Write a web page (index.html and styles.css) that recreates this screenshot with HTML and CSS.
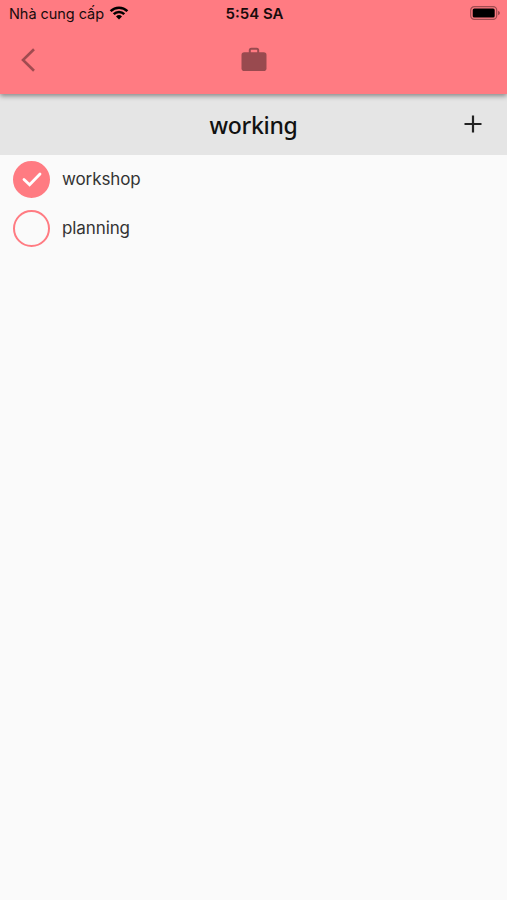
FILE: index.html
```html
<!DOCTYPE html>
<html lang="vi">
<head>
    <meta charset="UTF-8">
    <meta name="viewport" content="width=device-width, initial-scale=1">
    <title>working</title>
    <link rel="stylesheet" href="styles.css">
</head>
<body>

<header class="header">
    <div class="status-bar">
        <div class="carrier">
            <span class="carrier-name">Nhà cung cấp</span>
            <svg class="wifi" width="20" height="14" viewBox="0 0 20 14">
                <path d="M1.6 5.1a12 12 0 0 1 16.8 0M4.7 8.1a7.6 7.6 0 0 1 10.6 0" fill="none" stroke="#000" stroke-width="2.5"/>
                <path d="M7 10.5a4.3 4.3 0 0 1 6 0l-3 3z"/>
            </svg>
        </div>
        <span class="time">5:54 SA</span>
        <div class="battery">
            <svg width="30" height="14" viewBox="0 0 30 14">
                <rect x="0.7" y="0.7" width="26" height="12.6" rx="3.6" fill="none" stroke="#a04b50" stroke-width="1.2"/>
                <rect x="2.7" y="2.5" width="22" height="9" rx="1.6"/>
                <path d="M28 4.7q2 .7 2 2.3t-2 2.3z" fill="#a04b50"/>
            </svg>
        </div>
    </div>
    <nav class="nav-bar">
        <button class="back" aria-label="Back">
            <svg width="14" height="24" viewBox="0 0 14 24">
                <path d="M13 1.2L2 12l11 10.8" fill="none" stroke="#a04b50" stroke-width="2.6"/>
            </svg>
        </button>
        <svg class="briefcase" width="26" height="25" viewBox="0 0 26 25">
            <rect x="0.5" y="5.2" width="25" height="18.8" rx="2.8" fill="#994a4f"/>
            <path d="M8.8 6V3.2q0-1.5 1.5-1.5h5.4q1.5 0 1.5 1.5V6" fill="none" stroke="#994a4f" stroke-width="2"/>
        </svg>
    </nav>
</header>

<div class="title-bar">
    <h1>working</h1>
    <button class="add" aria-label="Add">
        <svg width="18" height="18" viewBox="0 0 18 18">
            <path d="M9 .5v17M.5 9h17" stroke="#222" stroke-width="2.2"/>
        </svg>
    </button>
</div>

<ul class="tasks">
    <li class="task">
        <span class="check done">
            <svg width="20" height="15" viewBox="0 0 20 15">
                <path d="M2 7.5l5.6 5.2L18 2" fill="none" stroke="#fff" stroke-width="2.8" stroke-linecap="round"/>
            </svg>
        </span>
        <span class="label">workshop</span>
    </li>
    <li class="task">
        <span class="check"></span>
        <span class="label">planning</span>
    </li>
</ul>

</body>
</html>
```
FILE: styles.css
```css
* {
    box-sizing: border-box;
}
body {
    margin: 0;
    min-height: 100vh;
    background-color: #fafafa;
    color: #333;
    font-family: Inter, sans-serif;
}
button {
    display: flex;
    padding: 0;
    border: none;
    background: none;
    cursor: pointer;
}
svg {
    display: block;
}
.header {
    position: relative;
    height: 94px;
    background-color: #ff7b82;
    box-shadow: 0 2px 5px rgba(0, 0, 0, 0.42);
}
.status-bar {
    display: grid;
    grid-template-columns: 1fr auto 1fr;
    align-items: center;
    height: 27px;
    padding: 0 7px 0 9px;
    color: #180b0c;
}
.carrier {
    display: flex;
    align-items: center;
    gap: 5px;
}
.carrier-name {
    font-size: 14.5px;
    letter-spacing: -0.05px;
    white-space: nowrap;
}
.wifi {
    margin-bottom: 2px;
}
.time {
    font-size: 15px;
    font-weight: 600;
}
.battery {
    justify-self: end;
    padding-bottom: 1px;
}
.nav-bar {
    display: grid;
    grid-template-columns: 1fr auto 1fr;
    align-items: center;
    height: 65px;
    padding: 0 21px;
}
.title-bar {
    display: grid;
    grid-template-columns: 1fr auto 1fr;
    align-items: center;
    height: 61px;
    padding: 0 25px;
    background-color: #e5e5e5;
}
.title-bar h1 {
    grid-column: 2;
    margin: 0;
    color: #111;
    font-family: "Noto Sans", sans-serif;
    font-size: 23px;
    font-weight: 500;
    letter-spacing: -0.3px;
    line-height: 32px;
}
.add {
    justify-self: end;
    padding-bottom: 1px;
}
.tasks {
    margin: 0;
    padding: 6px 13px;
    list-style: none;
}
.task {
    display: flex;
    align-items: center;
    gap: 12px;
    height: 37px;
    margin-bottom: 12px;
}
.check {
    display: flex;
    align-items: center;
    justify-content: center;
    width: 37px;
    height: 37px;
    border: 2px solid #ff7b82;
    border-radius: 50%;
}
.check.done {
    background-color: #ff7b82;
}
.label {
    padding-bottom: 1px;
    font-size: 17px;
    letter-spacing: -0.1px;
    line-height: 24px;
}
```
